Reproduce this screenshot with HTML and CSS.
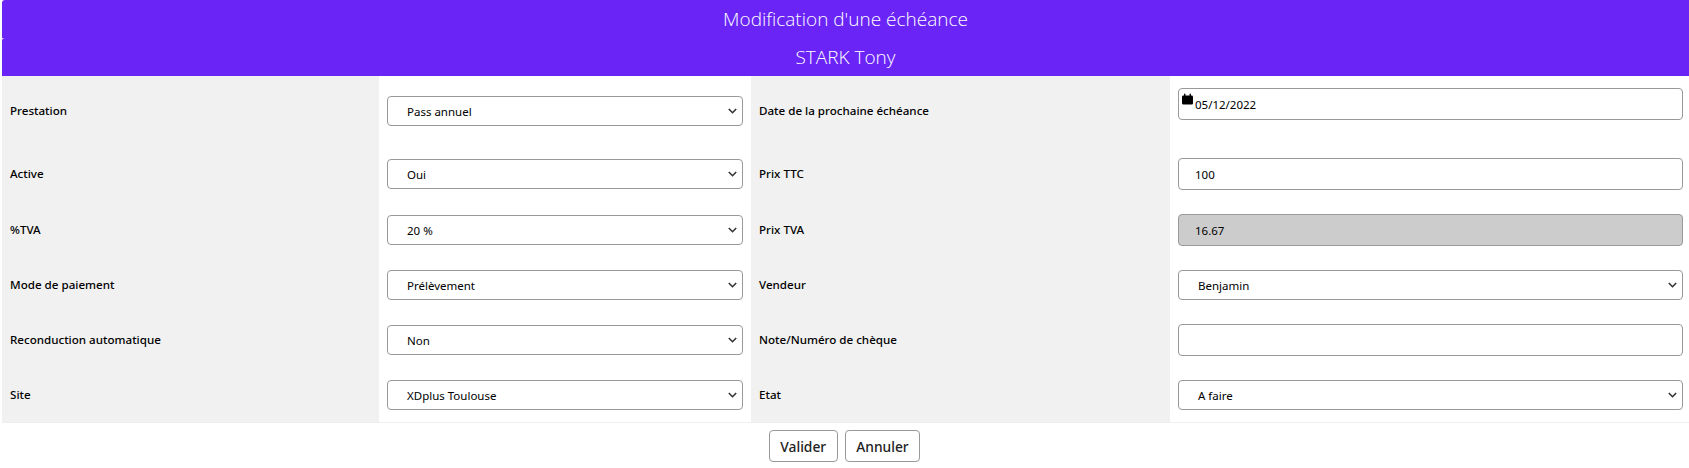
FILE: index.html
```html
<!DOCTYPE html>
<html lang="en">
<head>
    <meta charset="UTF-8">
    <title>Modification d'une échéance</title>
    <link rel="stylesheet" href="styles.css">
</head>
<body>
    <div class="title-bar">Modification d'une échéance</div>
    <div class="title-bar">STARK Tony</div>

    <div class="form-grid">
        <div class="lbl">Prestation</div>
        <div class="field"><select class="ctl ctl-select"><option>Pass annuel</option></select></div>
        <div class="lbl">Date de la prochaine échéance</div>
        <div class="field field-date">
            <svg class="cal-icon" viewBox="0 0 16 16" aria-hidden="true">
                <path d="M3 1a1 1 0 0 1 2 0v2h6V1a1 1 0 0 1 2 0v2h1a2 2 0 0 1 2 2v9a2 2 0 0 1-2 2H2a2 2 0 0 1-2-2V5a2 2 0 0 1 2-2h1z"/>
            </svg>
            <input class="ctl ctl-input" type="text" value="05/12/2022">
        </div>

        <div class="lbl">Active</div>
        <div class="field"><select class="ctl ctl-select"><option>Oui</option></select></div>
        <div class="lbl">Prix TTC</div>
        <div class="field"><input class="ctl ctl-input" type="text" value="100"></div>

        <div class="lbl">%TVA</div>
        <div class="field"><select class="ctl ctl-select"><option>20 %</option></select></div>
        <div class="lbl">Prix TVA</div>
        <div class="field"><input class="ctl ctl-input ctl-off" type="text" value="16.67" disabled></div>

        <div class="lbl">Mode de paiement</div>
        <div class="field"><select class="ctl ctl-select"><option>Prélèvement</option></select></div>
        <div class="lbl">Vendeur</div>
        <div class="field"><select class="ctl ctl-select"><option>Benjamin</option></select></div>

        <div class="lbl">Reconduction automatique</div>
        <div class="field"><select class="ctl ctl-select"><option>Non</option></select></div>
        <div class="lbl">Note/Numéro de chèque</div>
        <div class="field"><input class="ctl ctl-input" type="text"></div>

        <div class="lbl">Site</div>
        <div class="field"><select class="ctl ctl-select"><option>XDplus Toulouse</option></select></div>
        <div class="lbl">Etat</div>
        <div class="field"><select class="ctl ctl-select"><option>A faire</option></select></div>
    </div>

    <div class="actions">
        <button class="btn">Valider</button>
        <button class="btn">Annuler</button>
    </div>
</body>
</html>
```

FILE: styles.css
```css
body {
    margin: 0 0 0 2px;
    height: 468px;
    overflow: hidden;
    font-family: "Noto Sans", sans-serif;
    font-size: 11.6px;
    color: #000;
    background: #fff;
}

/* Header */
.title-bar {
    height: 38px;
    line-height: 38px;
    background: #6a24f6;
    color: #fff;
    text-align: center;
    font-family: "Open Sans", sans-serif;
    font-weight: 300;
    font-size: 19px;
    border-radius: 3px 0 0 0;
}

/* Form */
.form-grid {
    display: grid;
    grid-template-columns: 377px 372px 419px 1fr;
    grid-template-rows: 70px 56px 56px 54px 56px 54px;
    border-bottom: 1px solid #eee;
}

.lbl {
    display: flex;
    align-items: center;
    padding: 0 0 2px 8px;
    background: #f1f1f1;
    font-weight: 500;
}

.field {
    position: relative;
    display: flex;
    align-items: center;
    padding: 0 8px;
}

.field:nth-child(4n) {
    padding-right: 6px;
}

.ctl {
    width: 100%;
    height: 30px;
    box-sizing: border-box;
    padding: 0 0 0 16px;
    border: 1px solid #999;
    border-radius: 4px;
    background-color: #fff;
    font-family: inherit;
    font-size: 11.5px;
    color: #000;
}

.ctl-select {
    appearance: none;
    padding-left: 19px;
    background-image: url("data:image/svg+xml,%3Csvg xmlns='http://www.w3.org/2000/svg' width='9' height='6' viewBox='0 0 9 6'%3E%3Cpath d='M.8 1l3.700 3.700L8.200 1' fill='none' stroke='%23333' stroke-width='1.600'/%3E%3C/svg%3E");
    background-repeat: no-repeat;
    background-position: right 5px center;
}

.ctl-input {
    height: 32px;
}

.ctl-off {
    background-color: #ccc;
}

.field-date {
    align-items: flex-start;
    padding-top: 12px;
}

/* Calendar icon sits over the input */
.cal-icon {
    position: absolute;
    left: 12px;
    top: 17px;
    width: 11px;
    height: 12px;
    fill: #000;
}

/* Buttons */
.actions {
    display: flex;
    justify-content: center;
    gap: 7px;
    padding-top: 7px;
    margin-left: -2px;
}

.btn {
    height: 32px;
    padding: 0 10.5px;
    border: 1px solid #999;
    border-radius: 4px;
    background: #fff;
    font-family: inherit;
    font-size: 13.8px;
    font-weight: 500;
    color: #222;
}
```
